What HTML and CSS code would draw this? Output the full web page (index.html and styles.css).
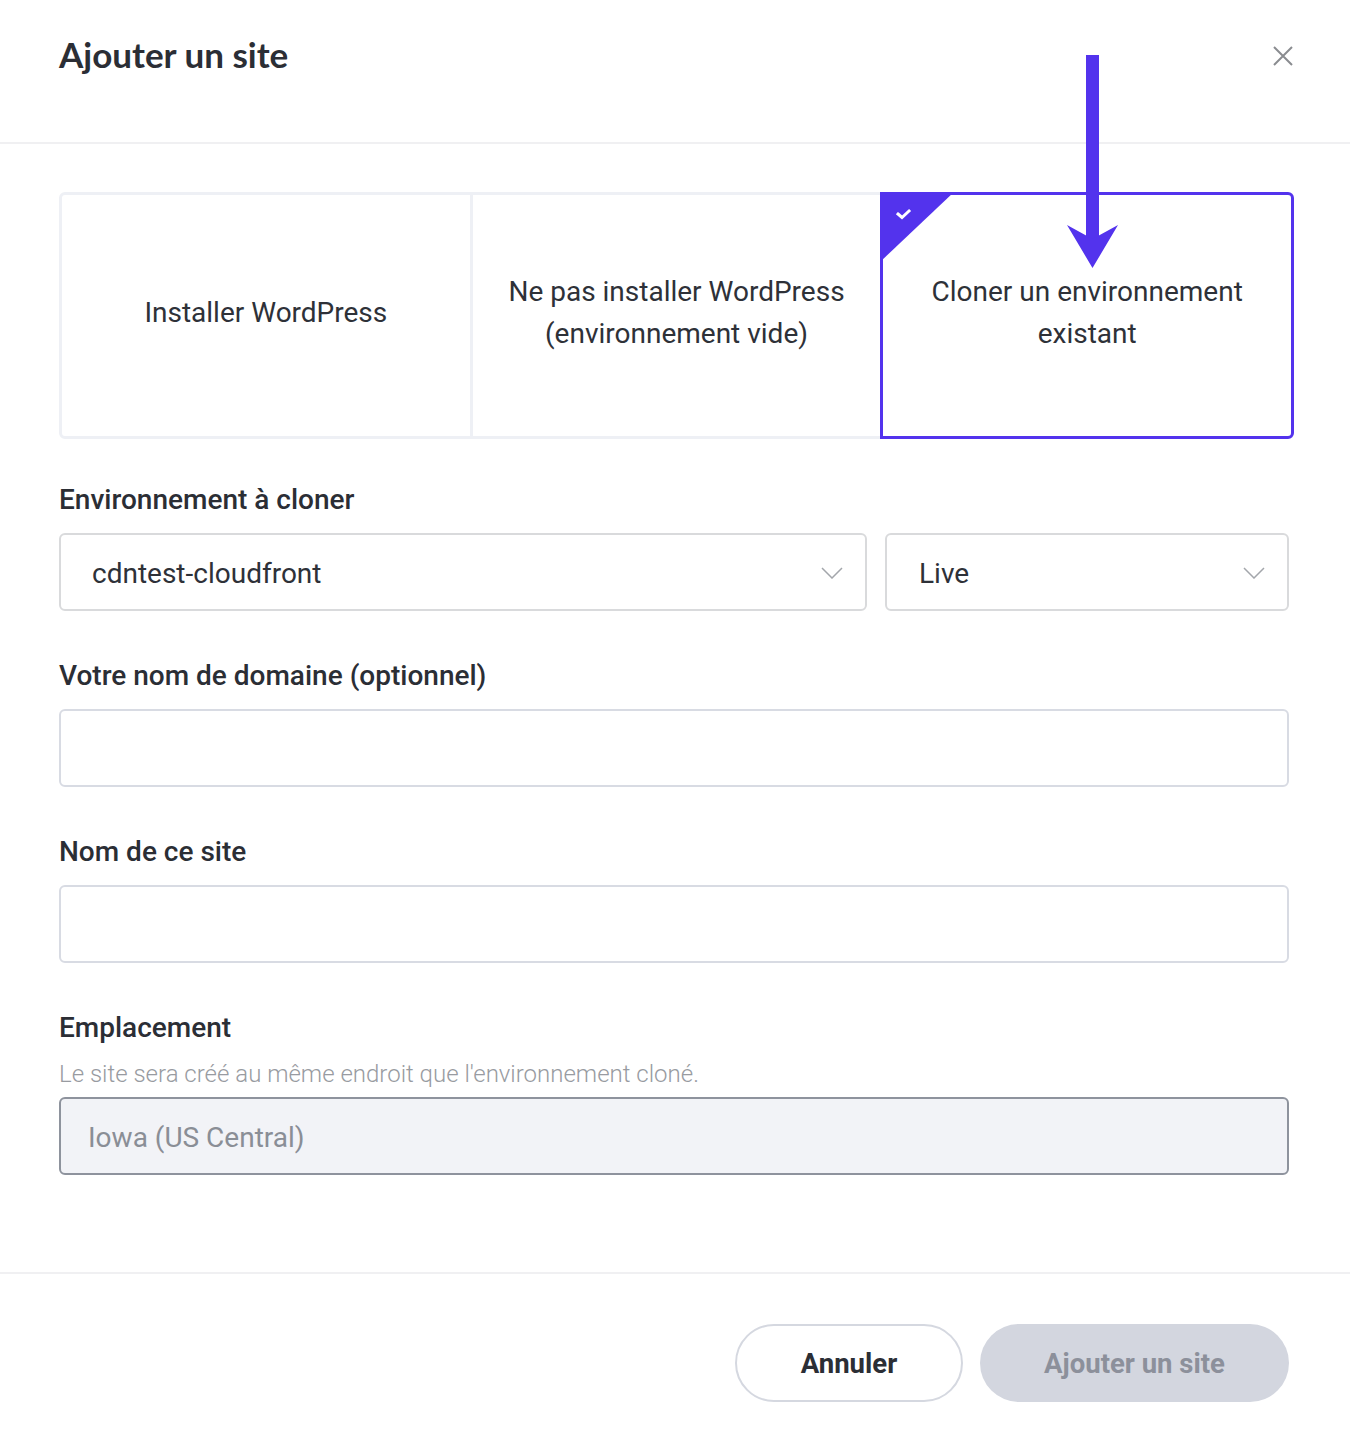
FILE: index.html
```html
<!DOCTYPE html>
<html lang="fr">
<head>
<meta charset="utf-8">
<title>Ajouter un site</title>
<link rel="stylesheet" href="styles.css">
</head>
<body>
<div class="modal">
  <header class="modal-header">
    <h1 class="modal-title">Ajouter un site</h1>
    <button class="close-btn" aria-label="Fermer">
      <svg width="22" height="22" viewBox="0 0 22 22"><path d="M2 2 L20 20 M20 2 L2 20" stroke="#8a8c90" stroke-width="2" fill="none"/></svg>
    </button>
  </header>

  <main class="modal-body">
    <div class="options">
      <div class="option option-first"><span>Installer WordPress</span></div>
      <div class="option"><span>Ne pas installer WordPress (environnement vide)</span></div>
      <div class="option option-selected">
        <span class="corner">
          <svg width="74" height="70" viewBox="0 0 74 70"><polygon points="0,0 74,0 0,70" fill="#5333ed"/><path d="M18 22 L22 25.5 L29 19" stroke="#fff" stroke-width="3" fill="none" stroke-linecap="square"/></svg>
        </span>
        <span>Cloner un environnement existant</span>
      </div>
    </div>

    <label class="field-label">Environnement à cloner</label>
    <div class="select-row">
      <div class="select select-wide">
        <span>cdntest-cloudfront</span>
        <svg class="chevron" width="22" height="12" viewBox="0 0 22 12"><path d="M1 1 L11 11 L21 1" stroke="#a3a6ab" stroke-width="1.5" fill="none"/></svg>
      </div>
      <div class="select select-narrow">
        <span>Live</span>
        <svg class="chevron" width="22" height="12" viewBox="0 0 22 12"><path d="M1 1 L11 11 L21 1" stroke="#a3a6ab" stroke-width="1.5" fill="none"/></svg>
      </div>
    </div>

    <label class="field-label">Votre nom de domaine (optionnel)</label>
    <div class="input"></div>

    <label class="field-label">Nom de ce site</label>
    <div class="input"></div>

    <label class="field-label">Emplacement</label>
    <p class="helper">Le site sera créé au même endroit que l'environnement cloné.</p>
    <div class="input input-disabled">Iowa (US Central)</div>
  </main>

  <footer class="modal-footer">
    <button class="btn btn-outline">Annuler</button>
    <button class="btn btn-disabled">Ajouter un site</button>
  </footer>

  <svg class="annotation-arrow" width="52" height="216" viewBox="0 0 52 216"><rect x="19" y="0" width="13" height="185" fill="#5333ed"/><polygon points="0,170 25.5,213 51,170 25.5,184" fill="#5333ed"/></svg>
</div>
</body>
</html>
```

FILE: styles.css
```css
* { box-sizing: border-box; }
html, body { margin: 0; padding: 0; background: #fff; }
body {
  font-family: Roboto, "Liberation Sans", Arial, sans-serif;
  color: #2e3138;
  width: 1350px;
}
.modal { position: relative; width: 1350px; min-height: 1446px; }

.modal-header {
  height: 144px;
  border-bottom: 2px solid #f0f0f2;
  display: flex;
  align-items: flex-start;
  justify-content: space-between;
  padding: 0 56px 0 59px;
}
.modal-title {
  margin: 30px 0 0;
  font-family: Lato, "Noto Sans", sans-serif;
  font-weight: 700;
  font-size: 35px;
  line-height: 48px;
  color: #2b2e35;
}
.close-btn {
  margin-top: 45px;
  background: none;
  border: 0;
  padding: 0;
  width: 22px;
  height: 22px;
  cursor: pointer;
}

.modal-body {
  padding: 48px 61px 97px 59px;
}

.options {
  display: flex;
  height: 247px;
  margin-right: -5px;
}
.option {
  flex: 1;
  position: relative;
  border: 3px solid #eef0f5;
  margin-left: -3px;
  display: flex;
  align-items: center;
  justify-content: center;
  text-align: center;
  padding: 0 28px 6px;
  font-size: 28px;
  line-height: 42px;
  color: #2e3138;
}
.option-first { margin-left: 0; border-radius: 6px 0 0 6px; }
.option-selected {
  border-color: #5333ed;
  border-radius: 0 6px 6px 0;
  z-index: 1;
}
.corner {
  position: absolute;
  top: -3px;
  left: -3px;
  width: 74px;
  height: 70px;
  line-height: 0;
}

.field-label {
  display: block;
  margin: 44px 0 16px;
  font-size: 28px;
  line-height: 34px;
  font-weight: 500;
  color: #2b2e35;
}
.field-label ~ .field-label { margin-top: 48px; }

.select-row { display: flex; gap: 18px; }
.select, .input {
  height: 78px;
  border: 2px solid #d9dadc;
  border-radius: 6px;
  background: #fff;
  display: flex;
  align-items: center;
  font-size: 28px;
}
.select { justify-content: space-between; padding: 2px 22px 0 31px; }
.select-wide { width: 808px; }
.select-narrow { flex: 1; padding-left: 32px; }
.chevron { flex: none; }

.input { border-color: #d8dbe3; }
.input-disabled {
  background: #f2f3f7;
  border-color: #8e939d;
  color: #8a8e96;
  padding: 2px 0 0 27px;
}

.helper {
  margin: -2px 0 8px;
  font-size: 24px;
  line-height: 30px;
  font-weight: 300;
  color: #989ba1;
}

.modal-footer {
  border-top: 2px solid #f0f0f2;
  display: flex;
  justify-content: flex-end;
  gap: 17px;
  padding: 50px 61px 0 0;
}
.btn {
  height: 78px;
  border-radius: 39px;
  font-family: Roboto, "Liberation Sans", Arial, sans-serif;
  font-size: 27.5px;
  font-weight: 700;
  cursor: pointer;
}
.btn-outline {
  width: 228px;
  background: #fff;
  border: 2px solid #d5d8e0;
  color: #2b2e35;
}
.btn-disabled {
  width: 309px;
  background: #d3d6df;
  border: 0;
  color: #8c909b;
}

.annotation-arrow {
  position: absolute;
  left: 1067px;
  top: 55px;
}
```
